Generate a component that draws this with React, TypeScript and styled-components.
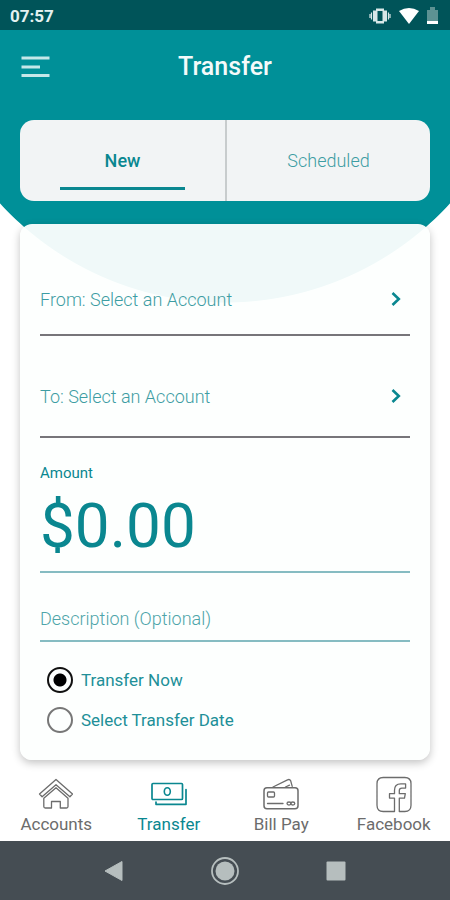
import React, { useState } from "react";
import styled, { createGlobalStyle } from "styled-components";

const teal = "#009098";
const ink = "#0a8790";

const GlobalStyle = createGlobalStyle`
  *, *::before, *::after { box-sizing: border-box; }
  body { margin: 0; background: #fff; }
  body, button, input { font-family: Roboto, "Noto Sans", sans-serif; }
  button { border: 0; padding: 0; background: none; cursor: pointer; }
`;

const Screen = styled.div`
  display: flex;
  flex-direction: column;
  min-height: 100vh;
  background: radial-gradient(ellipse 68% 307px at 50% -4px, ${teal} 99.7%, transparent 100%) no-repeat #fff;
`;

const StatusBar = styled.div`
  display: flex;
  align-items: center;
  justify-content: space-between;
  height: 30px;
  padding: 2px 12px 0 10px;
  background: #005459;
  color: #e4f1f1;
  font-size: 17px;
  font-weight: 700;
`;

const StatusIcons = styled.div`
  display: flex;
  align-items: center;
  gap: 8px;
  svg { display: block; }
`;

const Header = styled.header`
  display: grid;
  grid-template-columns: 30px 1fr 30px;
  align-items: center;
  height: 74px;
  padding: 0 20px;
`;

const MenuButton = styled.button`
  svg { display: block; }
`;

const Title = styled.h1`
  margin: 0;
  color: #f4fafa;
  text-align: center;
  font-size: 25px;
  font-weight: 500;
  line-height: 30px;
`;

const Main = styled.main`
  flex: 1;
  display: flex;
  flex-direction: column;
  gap: 23px;
  padding: 16px 20px 0;
`;

const Tabs = styled.div`
  display: grid;
  grid-template-columns: 1fr 1fr;
  height: 81px;
  overflow: hidden;
  border-radius: 14px;
  background: #f2f4f5;
`;

const Tab = styled.button<{ $active?: boolean }>`
  display: flex;
  flex-direction: column;
  align-items: center;
  justify-content: flex-end;
  gap: 16px;
  padding-bottom: 11px;
  color: ${(p) => (p.$active ? ink : "#3d9da3")};
  font-size: 18px;
  font-weight: ${(p) => (p.$active ? 500 : 300)};
  line-height: 20px;
  & + & { border-left: 2px solid #c8cccd; }
  &::after {
    content: "";
    width: 61%;
    height: 3px;
    background: ${(p) => (p.$active ? ink : "transparent")};
  }
`;

const Card = styled.form`
  display: flex;
  flex-direction: column;
  padding: 14px 20px 20px;
  border-radius: 12px;
  background: rgba(253, 255, 254, 0.95);
  box-shadow: 0 3px 8px rgba(0, 0, 0, 0.24);
`;

const AccountRow = styled.button`
  display: flex;
  align-items: center;
  justify-content: space-between;
  height: 98px;
  padding: 26px 8px 0 0;
  border-bottom: 2px solid #77757a;
  color: #3d9da3;
  font-size: 18px;
  font-weight: 300;
  & + & { height: 102px; padding-top: 20px; }
  svg { display: block; }
`;

const Field = styled.div`
  display: flex;
  flex-direction: column;
  border-bottom: 2px solid #86bcc2;
`;

const AmountLabel = styled.label`
  padding-top: 25px;
  color: ${ink};
  font-size: 15px;
  line-height: 20px;
`;

const AmountInput = styled.input`
  width: 100%;
  height: 88px;
  padding: 0 0 4px;
  border: 0;
  outline: 0;
  background: none;
  color: ${ink};
  font-size: 62px;
`;

const DescriptionInput = styled.input`
  width: 100%;
  height: 67px;
  padding: 24px 0 0;
  border: 0;
  outline: 0;
  background: none;
  color: ${ink};
  font-size: 18px;
  font-weight: 300;
  &::placeholder { color: #4da5a9; opacity: 1; }
`;

const Choices = styled.div`
  display: flex;
  flex-direction: column;
  padding: 18px 0 0 7px;
`;

const Choice = styled.label`
  display: flex;
  align-items: center;
  gap: 8px;
  height: 40px;
  color: #218f98;
  font-size: 17px;
  cursor: pointer;
`;

const Radio = styled.input`
  appearance: none;
  width: 26px;
  height: 26px;
  margin: 0;
  border: 2px solid #777;
  border-radius: 50%;
  &:checked {
    border-color: #111;
    background: radial-gradient(circle, #000 6px, transparent 7px);
  }
`;

const NavBar = styled.nav`
  display: grid;
  grid-template-columns: repeat(4, 1fr);
  height: 81px;
`;

const NavLink = styled.a<{ $active?: boolean }>`
  display: flex;
  flex-direction: column;
  align-items: center;
  padding-top: 15px;
  color: ${(p) => (p.$active ? ink : "#6c6c6c")};
  font-size: 17px;
  line-height: 22px;
  text-decoration: none;
  svg { display: block; }
`;

const SystemBar = styled.div`
  display: flex;
  justify-content: center;
  gap: 82px;
  height: 59px;
  background: #454d53;
`;

const SystemButton = styled.button`
  display: flex;
  align-items: center;
`;

const Chevron = () => (
  <svg width="12" height="18" viewBox="0 0 12 18" fill="none" stroke={ink} strokeWidth="2.6">
    <path d="M2.5 3 8.8 9l-6.3 6" />
  </svg>
);

const NavIcon = ({ children }: { children: React.ReactNode }) => (
  <svg width="38" height="38" viewBox="0 0 38 38" fill="none" stroke="currentColor" strokeWidth="1.3" strokeLinejoin="round" strokeLinecap="round">
    {children}
  </svg>
);

const HouseIcon = () => (
  <NavIcon>
    <path d="M19 4.5 35.5 19l-2.6 2.8L19 9.7 5.1 21.8 2.5 19z" />
    <path d="M6.8 23.2v8.3q0 1.5 1.5 1.5h6.2v-6.5h8.8V33h6.2q1.5 0 1.5-1.5v-8.3L19 12.8z" />
  </NavIcon>
);

const CashIcon = () => (
  <NavIcon>
    <rect x="2" y="8.5" width="30.5" height="16" rx="1" strokeWidth="1.7" />
    <ellipse cx="17.3" cy="16.5" rx="3" ry="3.8" strokeWidth="1.6" />
    <path d="M6 27v2.3h30V14.5" strokeWidth="1.7" />
  </NavIcon>
);

const CardsIcon = () => (
  <NavIcon>
    <rect x="2" y="12.7" width="34" height="21" rx="3" strokeWidth="1.5" />
    <path d="M11 12 25.5 4.8q2.2-1 3.2 1l1.5 5.5M23.5 12l4-1.8" />
    <rect x="5.5" y="17" width="7" height="5" rx="1" />
    <path d="M5.5 28.5H21" />
    <ellipse cx="27" cy="28.5" rx="2" ry="1.5" />
    <ellipse cx="30.8" cy="28.5" rx="2" ry="1.5" />
  </NavIcon>
);

const FacebookIcon = () => (
  <NavIcon>
    <path d="M19.5 36.5H8.2Q2 36.5 2 30.3V8.7Q2 2.5 8.2 2.5h21.6Q36 2.5 36 8.7v21.6q0 6.2-6.2 6.2h-5.5V23.1h5.2l.8-4.4h-6v-3.1q0-2.5 2.6-2.5h3.7V8.9h-4.8q-6.3 0-6.3 6.4v3.4h-5v4.4h5z" />
  </NavIcon>
);

const StatusGlyphs = () => (
  <StatusIcons>
    <svg width="22" height="16" viewBox="0 0 22 16" fill="none" stroke="#d8e8e8">
      <path d="M7 .5h8v2h3v11h-3v2H7v-2H4v-11h3z" fill="#d8e8e8" stroke="none" />
      <rect x="8.5" y="3" width="5" height="10" fill="#005459" stroke="none" />
      <path d="M1 6v4M2.5 4.5v7M19.5 4.5v7M21 6v4" strokeWidth="1.2" />
    </svg>
    <svg width="20" height="16" viewBox="0 0 20 16">
      <path d="M0 3Q10-3 20 3L10 16z" fill="#fff" />
    </svg>
    <svg width="11" height="18" viewBox="0 0 11 18">
      <path d="M0 3h3V0h5v3h3v12H0z" fill="#5d9293" />
      <path d="M0 14h11v3H0z" fill="#fff" />
    </svg>
  </StatusIcons>
);

export default function App() {
  const [tab, setTab] = useState("new");
  const [amount, setAmount] = useState("$0.00");
  const [when, setWhen] = useState("now");

  return (
    <>
      <GlobalStyle />
      <Screen>
        <StatusBar>
          <span>07:57</span>
          <StatusGlyphs />
        </StatusBar>
        <Header>
          <MenuButton type="button" aria-label="Menu">
            <svg width="30" height="24" viewBox="0 0 30 24" stroke="#c5e8e9" strokeWidth="3">
              <path d="M1.5 3h28M1.5 12H20M1.5 20.5h28" />
            </svg>
          </MenuButton>
          <Title>Transfer</Title>
        </Header>
        <Main>
          <Tabs role="tablist">
            <Tab type="button" role="tab" aria-selected={tab === "new"} $active={tab === "new"} onClick={() => setTab("new")}>
              New
            </Tab>
            <Tab type="button" role="tab" aria-selected={tab === "scheduled"} $active={tab === "scheduled"} onClick={() => setTab("scheduled")}>
              Scheduled
            </Tab>
          </Tabs>
          <Card>
            <AccountRow type="button">
              From: Select an Account
              <Chevron />
            </AccountRow>
            <AccountRow type="button">
              To: Select an Account
              <Chevron />
            </AccountRow>
            <Field>
              <AmountLabel htmlFor="amount">Amount</AmountLabel>
              <AmountInput id="amount" inputMode="decimal" value={amount} onChange={(e) => setAmount(e.target.value)} />
            </Field>
            <Field>
              <DescriptionInput aria-label="Description (Optional)" placeholder="Description (Optional)" />
            </Field>
            <Choices role="radiogroup" aria-label="Transfer date">
              <Choice>
                <Radio type="radio" name="when" checked={when === "now"} onChange={() => setWhen("now")} />
                Transfer Now
              </Choice>
              <Choice>
                <Radio type="radio" name="when" checked={when === "date"} onChange={() => setWhen("date")} />
                Select Transfer Date
              </Choice>
            </Choices>
          </Card>
        </Main>
        <NavBar>
          <NavLink href="#accounts">
            <HouseIcon />
            Accounts
          </NavLink>
          <NavLink href="#transfer" $active aria-current="page">
            <CashIcon />
            Transfer
          </NavLink>
          <NavLink href="#billpay">
            <CardsIcon />
            Bill Pay
          </NavLink>
          <NavLink href="#facebook">
            <FacebookIcon />
            Facebook
          </NavLink>
        </NavBar>
        <SystemBar>
          <SystemButton type="button" aria-label="Back">
            <svg width="28" height="28" viewBox="0 0 28 28">
              <path d="M5 14 22 4.5v19z" fill="#b6bebe" stroke="#b6bebe" strokeLinejoin="round" />
            </svg>
          </SystemButton>
          <SystemButton type="button" aria-label="Home">
            <svg width="30" height="30" viewBox="0 0 30 30">
              <circle cx="15" cy="15" r="13" fill="none" stroke="#b6bebe" strokeWidth="1.8" />
              <circle cx="15" cy="15" r="9.5" fill="#b6bebe" />
            </svg>
          </SystemButton>
          <SystemButton type="button" aria-label="Recent apps">
            <svg width="28" height="28" viewBox="0 0 28 28">
              <rect x="4.5" y="4.5" width="19" height="19" rx="1" fill="#b6bebe" />
            </svg>
          </SystemButton>
        </SystemBar>
      </Screen>
    </>
  );
}
